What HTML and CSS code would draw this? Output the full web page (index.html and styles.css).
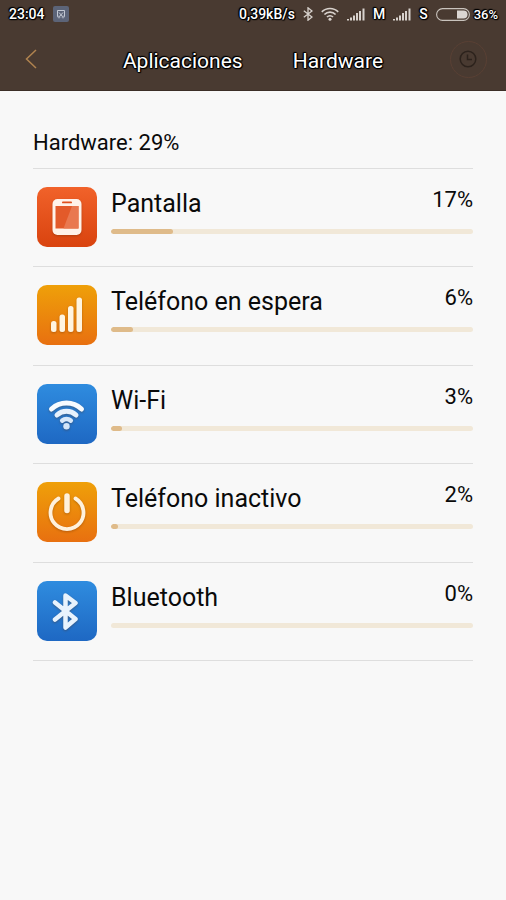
FILE: index.html
```html
<!DOCTYPE html>
<html lang="es">
<head>
<meta charset="utf-8">
<meta name="viewport" content="width=device-width, initial-scale=1">
<title>Hardware</title>
<link rel="stylesheet" href="styles.css">
</head>
<body>
<header class="top">
  <div class="status">
    <div class="status-group">
      <span class="outlined">23:04</span>
      <svg class="notice" width="16" height="16" viewBox="0 0 16 16" fill="none"><rect width="16" height="16" rx="2" fill="#5c6478"/><path d="M5 10.500H4.500V4.500h7v6H11M6 6.500l3.500 4M10 6.500l-3.500 4" stroke="#c3c9d4"/><circle cx="6" cy="11" r="1" stroke="#c3c9d4" stroke-width=".7"/><circle cx="10" cy="11" r="1" stroke="#c3c9d4" stroke-width=".7"/></svg>
    </div>
    <div class="status-group status-right">
      <span class="outlined">0,39kB/s</span>
      <svg class="bt" width="10" height="14" viewBox="0 0 10 14" fill="none" stroke="#d8d2cd" stroke-width="1.300"><path d="M.8 3.800L9 10 5 13.200V.8L9 4 .8 10.200"/></svg>
      <svg class="wifi" width="18" height="14" viewBox="0 0 18 14" fill="none" stroke="#d8d2cd" stroke-width="1.700"><path d="M.8 4.900a11.600 11.600 0 0 1 16.400 0M3.400 7.500a7.900 7.900 0 0 1 11.200 0M6 10a4.200 4.200 0 0 1 6 0"/><circle cx="9" cy="12.300" r="1.500" fill="#d8d2cd" stroke="none"/></svg>
      <svg class="signal" width="18" height="13" viewBox="0 0 18 13" fill="#d8d2cd"><path d="M0 11h2v1.500H0zM3 9.500h2v3H3zM6 7.500h2v5H6zM9 5h2v7.500H9zM12 3h2v9.500h-2zM15.500.5h2v12h-2z"/></svg>
      <span class="outlined">M</span>
      <svg class="signal" width="18" height="13" viewBox="0 0 18 13" fill="#d8d2cd"><path d="M0 11h2v1.500H0zM3 9.500h2v3H3zM6 7.500h2v5H6zM9 5h2v7.500H9zM12 3h2v9.500h-2zM15.500.5h2v12h-2z"/></svg>
      <span class="outlined">S</span>
      <svg class="battery" width="34" height="13" viewBox="0 0 34 13"><rect x=".6" y=".6" width="32.800" height="11.800" rx="5.900" fill="none" stroke="#c9c3bd" stroke-width="1.100"/><path d="M21 2.500h6.500a4 4 0 0 1 0 8H21z" fill="#dbd6d2"/></svg>
      <span class="outlined battery-text">36%</span>
    </div>
  </div>
  <nav class="bar">
    <button class="back" aria-label="Atrás"><svg width="12" height="20" viewBox="0 0 12 20" fill="none" stroke="#b0834f" stroke-width="1.500"><path d="M11 1L1.500 10 11 19"/></svg></button>
    <div class="tabs">
      <button class="tab outlined">Aplicaciones</button>
      <button class="tab outlined">Hardware</button>
    </div>
    <button class="history" aria-label="Historial"><svg width="18" height="18" viewBox="0 0 18 18" fill="none" stroke="#2c221c" stroke-width="1.500"><circle cx="9" cy="9" r="7.800"/><path d="M8.500 4.500v5H13"/></svg></button>
  </nav>
</header>
<main class="content">
  <h1 class="heading">Hardware: 29%</h1>
  <ul class="list">
    <li class="row">
      <svg class="icon" viewBox="0 0 60 60"><defs><linearGradient id="red" x2="0" y2="1"><stop stop-color="#f1622a"/><stop offset="1" stop-color="#d9430f"/></linearGradient></defs><rect width="60" height="60" rx="10" fill="url(#red)"/><g class="glyph"><rect x="15.500" y="12" width="29" height="36" rx="5" fill="#fff2e9"/><rect x="18.500" y="19" width="23" height="22.500" fill="#e35a2a"/><path d="M35 19h6.500v22.500H26.500z" fill="#e97850"/><rect x="25" y="14.500" width="10" height="1.800" rx=".9" fill="#e0501d"/></g></svg>
      <div class="detail">
        <div class="line"><label class="name" for="p1">Pantalla</label><span class="value">17%</span></div>
        <progress class="meter" id="p1" max="100" value="17"></progress>
      </div>
    </li>
    <li class="row">
      <svg class="icon" viewBox="0 0 60 60"><defs><linearGradient id="orange" x2="0" y2="1"><stop stop-color="#efa009"/><stop offset="1" stop-color="#e87010"/></linearGradient></defs><rect width="60" height="60" rx="10" fill="url(#orange)"/><g class="glyph" fill="#fff4df"><rect x="14" y="36" width="5.500" height="11" rx="2.500"/><rect x="22.500" y="29.500" width="5.500" height="17.500" rx="2.500"/><rect x="31" y="21" width="5.500" height="26" rx="2.500"/><rect x="39.500" y="12.500" width="5.500" height="34.500" rx="2.500"/></g></svg>
      <div class="detail">
        <div class="line"><label class="name" for="p2">Teléfono en espera</label><span class="value">6%</span></div>
        <progress class="meter" id="p2" max="100" value="6"></progress>
      </div>
    </li>
    <li class="row">
      <svg class="icon" viewBox="0 0 60 60"><defs><linearGradient id="blue" x2="0" y2="1"><stop stop-color="#2f8cdf"/><stop offset="1" stop-color="#1e68c3"/></linearGradient></defs><rect width="60" height="60" rx="10" fill="url(#blue)"/><g class="glyph" fill="none" stroke-width="5" stroke-linecap="round"><path d="M14.500 25a22 22 0 0 1 30 0" stroke="#f7fbff"/><path d="M20 31a14 14 0 0 1 19 0" stroke="#e6f1fc"/><path d="M25.200 36.600a7 7 0 0 1 8.600 0" stroke="#d7e8fa" stroke-width="4.500"/><circle cx="29.500" cy="42.300" r="3.200" fill="#d3e5f8"/></g></svg>
      <div class="detail">
        <div class="line"><label class="name" for="p3">Wi-Fi</label><span class="value">3%</span></div>
        <progress class="meter" id="p3" max="100" value="3"></progress>
      </div>
    </li>
    <li class="row">
      <svg class="icon" viewBox="0 0 60 60"><rect width="60" height="60" rx="10" fill="url(#orange)"/><g class="glyph" fill="none" stroke="#fff1dc" stroke-linecap="round"><path d="M21.500 16.500a16.500 16.500 0 1 0 17 0" stroke-width="3.800"/><path d="M30 14v14.500" stroke-width="5.500"/></g></svg>
      <div class="detail">
        <div class="line"><label class="name" for="p4">Teléfono inactivo</label><span class="value">2%</span></div>
        <progress class="meter" id="p4" max="100" value="2"></progress>
      </div>
    </li>
    <li class="row">
      <svg class="icon" viewBox="0 0 60 60"><rect width="60" height="60" rx="10" fill="url(#blue)"/><path class="glyph" d="M18 21.500L38.500 38 28.500 46.500v-32L38.500 22 18 38.500" fill="none" stroke="#e8f3fd" stroke-width="4.500" stroke-linecap="round" stroke-linejoin="round"/></svg>
      <div class="detail">
        <div class="line"><label class="name" for="p5">Bluetooth</label><span class="value">0%</span></div>
        <progress class="meter" id="p5" max="100" value="0"></progress>
      </div>
    </li>
  </ul>
</main>
</body>
</html>
```
FILE: styles.css
```css
* {
  box-sizing: border-box;
}

body {
  margin: 0;
  background: #f8f8f8;
  color: #0a0a0a;
  font-family: Roboto, "Liberation Sans", sans-serif;
}

button {
  padding: 0;
  border: 0;
  background: none;
  color: inherit;
  font: inherit;
}

svg {
  display: block;
  flex: none;
}

.top {
  background: #493a31;
  border-bottom: 1px solid #3b2e27;
  color: #fff;
}

.outlined {
  text-shadow: 1px 0 1px #000, -1px 0 1px #000, 0 1px 1px #000, 0 -1px 1px #000, 1px 1px 1px #000, -1px -1px 1px #000;
}

.status {
  display: flex;
  justify-content: space-between;
  height: 28px;
  padding: 0 8px 0 9px;
  font-size: 14px;
  font-weight: 500;
}

.status-group {
  display: flex;
  align-items: center;
  gap: 8px;
}

.battery-text {
  margin-left: -4px;
  font-size: 13px;
}

.bar {
  display: flex;
  align-items: center;
  justify-content: space-between;
  height: 62px;
  padding: 0 19px 0 25px;
}

.back {
  width: 31px;
}

.tabs {
  display: flex;
  gap: 50px;
  padding-top: 3px;
}

.tab {
  font-size: 21px;
  line-height: 28px;
}

.history {
  display: grid;
  place-items: center;
  width: 37px;
  height: 37px;
  border: 1px solid #594034;
  border-radius: 50%;
}

.content {
  padding: 37px 33px;
}

.heading {
  margin: 0;
  padding-bottom: 10px;
  border-bottom: 1px solid #dedede;
  font-size: 22px;
  font-weight: 400;
  line-height: 30px;
}

.list {
  margin: 0;
  padding: 0;
  list-style: none;
}

.row {
  display: flex;
  gap: 14px;
  min-height: 98px;
  padding: 18px 0 18px 4px;
  border-bottom: 1px solid #dedede;
}

.row:nth-child(even) {
  min-height: 99px;
}

.icon {
  width: 60px;
  height: 60px;
}

.glyph {
  filter: drop-shadow(0 1px 1px rgba(90, 40, 0, 0.35));
}

.detail {
  flex: 1;
}

.line {
  display: flex;
  justify-content: space-between;
}

.name {
  font-size: 25px;
  line-height: 34px;
}

.value {
  font-size: 22px;
  line-height: 26px;
}

.meter {
  display: block;
  appearance: none;
  width: 100%;
  height: 5px;
  margin-top: 8px;
  border: 0;
  border-radius: 3px;
  background: #f1e8d8;
  overflow: hidden;
}

.meter::-webkit-progress-bar {
  background: #f1e8d8;
}

.meter::-webkit-progress-value {
  border-radius: 3px;
  background: #dfbb8a;
}
```
